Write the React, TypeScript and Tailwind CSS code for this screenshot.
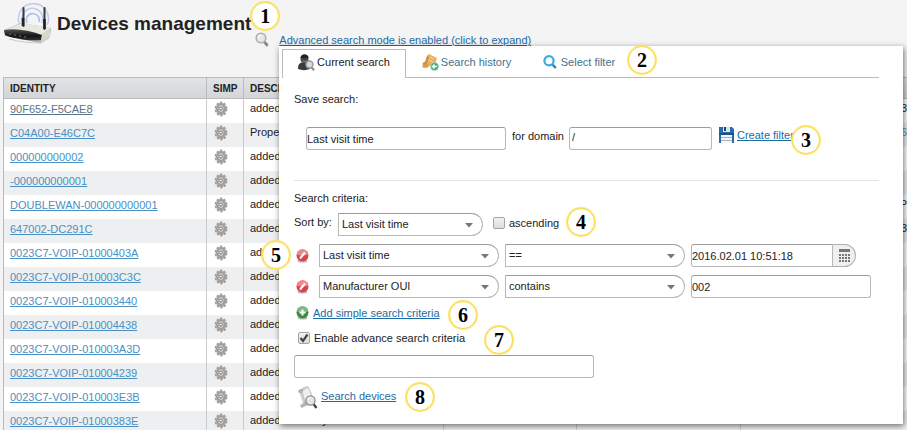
import React, { useState } from "react";

const devices = [
  { id: "90F652-F5CAE8", description: "added manually", end: "3", visited: true },
  { id: "C04A00-E46C7C", description: "Property", end: "6", link: true },
  { id: "000000000002", description: "added manually" },
  { id: "-000000000001", description: "added manually" },
  { id: "DOUBLEWAN-000000000001", description: "added manually", end: "P" },
  { id: "647002-DC291C", description: "added manually", end: "3" },
  { id: "0023C7-VOIP-01000403A", description: "added manually" },
  { id: "0023C7-VOIP-010003C3C", description: "added manually" },
  { id: "0023C7-VOIP-010003440", description: "added manually" },
  { id: "0023C7-VOIP-010004438", description: "added manually" },
  { id: "0023C7-VOIP-010003A3D", description: "added manually" },
  { id: "0023C7-VOIP-010004239", description: "added manually" },
  { id: "0023C7-VOIP-010003E3B", description: "added manually" },
  { id: "0023C7-VOIP-01000383E", description: "added manually" },
];

const fieldBorder = "border border-[#b8b8b8] border-t-[#9c9c9c] bg-white text-[11px] text-[#222]";
const linkStyle = "text-[#1d6ba5] underline underline-offset-1";

function Badge({ n, className }: { n: number; className: string }) {
  return (
    <span
      className={`absolute z-10 m-px flex size-7 items-center justify-center rounded-full border border-[#fadc45] bg-white font-['Liberation_Serif',serif] text-xl leading-none font-bold text-black shadow-[0_0_1px_1px_#fbe36a] ${className}`}
    >
      {n}
    </span>
  );
}

function RouterIcon() {
  return (
    <svg width="48" height="42" viewBox="0 0 48 42" className="shrink-0" aria-hidden="true">
      <defs>
        <linearGradient id="routerFront" x1="0" y1="0" x2="0" y2="1">
          <stop offset="0" stopColor="#555" />
          <stop offset="0.6" stopColor="#151515" />
          <stop offset="1" stopColor="#333" />
        </linearGradient>
      </defs>
      <g fill="none" stroke="#c3ceef" strokeWidth="1.6">
        <path d="M17 24A15 15 0 1 1 43 22" />
        <path d="M20 22A10.500 10.500 0 1 1 38 20" />
        <path d="M23 20A6.500 6.500 0 1 1 35 19" stroke="#b0bfe9" />
      </g>
      <path d="M0 27 17 20l30 5-1 9-10 6L1 33z" fill="#b4b3a6" />
      <path d="M1 27 18 20l29 5-10 7z" fill="#e9e8de" />
      <path d="M0 27c12-2 24 0 38 5l-1 5C24 38 11 36 1 32z" fill="url(#routerFront)" />
      <path d="m38 31 8-5v8l-9 5z" fill="#d9d8cc" />
      <path d="M5 31h2m3 1h2m3 1h2m3 1h2" stroke="#5d7d5d" strokeWidth="1" />
      <path d="M19.500 5v18M40.500 5v21" stroke="#343a46" strokeWidth="2" strokeLinecap="round" />
      <path d="M19 15v8M40.500 16v10" stroke="#222" strokeWidth="2.600" />
      <path d="M5 36c10 3 22 4 32 4l8-5" fill="none" stroke="#c9c9c9" />
    </svg>
  );
}

function GreySearchIcon() {
  return (
    <svg width="14" height="15" viewBox="0 0 14 15" aria-hidden="true">
      <path d="m9 9.500 3 3.500" stroke="#888" strokeWidth="2.800" strokeLinecap="round" />
      <circle cx="6" cy="6" r="4.800" fill="#e4e7ea" stroke="#b0b0b0" strokeWidth="1.600" />
      <path d="M3.500 6A2.500 2.500 0 0 1 6 3.500" fill="none" stroke="#fff" strokeWidth="1.200" />
    </svg>
  );
}

function GearIcon() {
  return (
    <svg width="14" height="16" viewBox="0 0 14 16" aria-hidden="true">
      <ellipse cx="7" cy="8" rx="5.600" ry="6.600" fill="none" stroke="#a09d9b" strokeWidth="1.600" strokeDasharray="2.400 1.500" />
      <ellipse cx="7" cy="8" rx="5.200" ry="6.200" fill="#a5a2a0" />
      <ellipse cx="7" cy="7.500" rx="3.200" ry="4" fill="#cfcdcb" stroke="#918e8b" strokeWidth="0.800" />
      <circle cx="7" cy="7.500" r="1.500" fill="#f4f4f4" stroke="#7d7a78" />
    </svg>
  );
}

function PersonSearchIcon() {
  return (
    <svg width="17" height="17" viewBox="0 0 17 17" aria-hidden="true">
      <path d="M0 15c0-4 1-6 4-6.500h4c3 .5 4 2.500 4 6.500-4 1.500-8 1.500-12 0z" fill="#3b3b3b" />
      <circle cx="6.500" cy="5" r="4" fill="#444" />
      <path d="M2.500 4c0-5 8-5 8 0z" fill="#222" />
      <path d="M4.500 6.500c1 1.500 3 1.500 4 0" fill="none" stroke="#999" />
      <path d="m13.500 13.500 2 2" stroke="#888" strokeWidth="2.200" strokeLinecap="round" />
      <circle cx="11.500" cy="10.500" r="3.500" fill="#d5d8da" stroke="#9b9b9b" strokeWidth="1.400" />
    </svg>
  );
}

function HistoryIcon() {
  return (
    <svg width="17" height="17" viewBox="0 0 17 17" aria-hidden="true">
      <path d="M5 2c1-2 3-2 4-1l6 3-3 9-9-3z" fill="#e8b062" />
      <path d="M5 2c2 0 2 2 1 4l-2 6-3-1c-1-1 0-3 2-3z" fill="#d08a3c" />
      <path d="m8 3 4 2M7 6l4 2" stroke="#f7d69c" />
      <path d="M0 12c1 3 4 1 5 2l3-3-4-1z" fill="#dc9c4c" />
      <circle cx="12.500" cy="12.500" r="4" fill="#3fa677" stroke="#b7dccb" strokeWidth="0.800" />
      <path d="M15 12.500h-4m1.500-2-2 2 2 2" fill="none" stroke="#fff" strokeWidth="1.500" />
    </svg>
  );
}

function BlueSearchIcon() {
  return (
    <svg width="14" height="14" viewBox="0 0 14 14" className="mr-0.5" aria-hidden="true">
      <path d="m9 9 3.800 4" stroke="#1f87b8" strokeWidth="2.400" />
      <circle cx="6" cy="5.800" r="4.600" fill="none" stroke="#35aee2" strokeWidth="2.200" />
    </svg>
  );
}

function SaveIcon() {
  return (
    <svg width="15" height="16" viewBox="0 0 15 16" aria-hidden="true">
      <path d="M0 0h13l2 2v14H0z" fill="#2b6ca8" />
      <path d="M4 0h7v5H4z" fill="#d9e6f0" />
      <path d="M5 0h2v4H5z" fill="#174773" />
      <path d="M0 6h15v2H0z" fill="#17558c" />
      <path d="M2 8h11v8H2z" fill="#f2f4f5" />
      <path d="M2 10.500h11M2 13.500h11" stroke="#a9b4bc" />
    </svg>
  );
}

function RemoveIcon() {
  return (
    <svg width="13" height="14" viewBox="0 0 13 14" aria-hidden="true">
      <ellipse cx="6.500" cy="12" rx="5" ry="1.500" fill="#bbb" />
      <circle cx="6.500" cy="6.500" r="6" fill="#d9434a" />
      <path d="M1 5.500a5.500 5.500 0 0 1 11 0c-3 1.500-8 1.500-11 0z" fill="#ec8a8c" />
      <path d="m4 9.500 5-6" stroke="#fff" strokeWidth="2" />
    </svg>
  );
}

function AddIcon() {
  return (
    <svg width="13" height="14" viewBox="0 0 13 14" aria-hidden="true">
      <ellipse cx="6.500" cy="12" rx="5" ry="1.500" fill="#bbb" />
      <circle cx="6.500" cy="6.500" r="6" fill="#3c8a43" />
      <path d="M1 5.500a5.500 5.500 0 0 1 11 0c-3 1.500-8 1.500-11 0z" fill="#82b686" />
      <path d="M6.500 3.500v6m-3-3h6" stroke="#fff" strokeWidth="2" />
    </svg>
  );
}

function CalendarIcon() {
  return (
    <svg width="11" height="13" viewBox="0 0 11 13" fill="#777" aria-hidden="true">
      <path d="M0 0h11v3H0z" />
      <path d="M0 5h2v2H0zm3 0h2v2H3zm3 0h2v2H6zm3 0h2v2H9zM0 8h2v2H0zm3 0h2v2H3zm3 0h2v2H6zm3 0h2v2H9zM0 11h2v2H0zm3 0h2v2H3zm3 0h2v2H6zm3 0h2v2H9z" />
    </svg>
  );
}

function SearchDevicesIcon() {
  return (
    <svg width="20" height="23" viewBox="0 0 20 23" aria-hidden="true">
      <path d="M5 1 10 0l3 6 3 8-7 6-6 1-1-2 3-2L2 8z" fill="#cfcfcf" />
      <path d="M4 5 10 1l4 9-7 6z" fill="#efefef" stroke="#b0b0b0" strokeWidth="0.600" />
      <path d="M0 6c0-2 3-4 5-3 1 2-1 3-2 5zM2 20l6-5 2 3-6 4z" fill="#b4b4b4" />
      <path d="m15.500 18 3 4" stroke="#444" strokeWidth="2.400" />
      <circle cx="12.500" cy="14.500" r="4.600" fill="#e3e6e8" stroke="#8c8c8c" strokeWidth="1.300" />
      <path d="M10 14a3 3 0 0 1 3-2.500" fill="none" stroke="#fff" />
    </svg>
  );
}

function Select({ label, options, className }: { label: string; options: string[]; className: string }) {
  return (
    <span className={`relative block h-[23px] ${className}`}>
      <select
        aria-label={label}
        className={`block h-full w-full appearance-none rounded-l-[3px] rounded-r-full pr-7 pl-[3px] ${fieldBorder}`}
      >
        {options.map((option) => (
          <option key={option}>{option}</option>
        ))}
      </select>
      <svg width="8" height="5" viewBox="0 0 8 5" className="pointer-events-none absolute top-[10px] right-[10px]" aria-hidden="true">
        <path d="M0 0h8L4 4.500z" fill="#777" />
      </svg>
    </span>
  );
}

function Checkbox({ id, defaultChecked }: { id: string; defaultChecked?: boolean }) {
  return (
    <span className="relative block size-3">
      <input
        id={id}
        type="checkbox"
        defaultChecked={defaultChecked}
        className="peer block size-3 appearance-none rounded-[2px] border border-[#a5a5a5] bg-linear-to-b from-[#f2f2f2] to-[#dcdcdc]"
      />
      <svg viewBox="0 0 12 12" className="pointer-events-none absolute inset-0 hidden size-3 peer-checked:block" aria-hidden="true">
        <path d="m2.500 6 2.500 3 4.500-6.500" fill="none" stroke="#444" strokeWidth="2.200" />
      </svg>
    </span>
  );
}

const tabs = [
  { name: "Current search", Icon: PersonSearchIcon, width: "w-[124px]" },
  { name: "Search history", Icon: HistoryIcon, width: "w-[121px]" },
  { name: "Select filter", Icon: BlueSearchIcon, width: "w-[104px]" },
];

function SearchPanel() {
  const [active, setActive] = useState("Current search");
  return (
    <section className="absolute top-[46px] right-1 left-[279px] h-[378px] bg-white pt-[3px] pr-6 pl-[3px] shadow-[1px_2px_6px_rgba(0,0,0,0.55)]">
      <div role="tablist" className="flex h-[29px] border-b border-[#bbb]">
        {tabs.map(({ name, Icon, width }) => (
          <button
            key={name}
            role="tab"
            aria-selected={active === name}
            onClick={() => setActive(name)}
            className={`flex h-[29px] items-center justify-center gap-0.5 pb-[3px] text-[11px] ${width} ${
              active === name ? "border border-b-0 border-[#bbb] bg-white text-[#222]" : "text-[#46708c]"
            }`}
          >
            <Icon />
            {name}
          </button>
        ))}
      </div>
      <Badge n={2} className="-top-px left-[348px]" />

      <div className="pt-[13px] pl-3 text-[11px] text-[#222]">
        <h2 className="leading-4">Save search:</h2>
        <div className="mt-5 flex items-start pl-3">
          <input aria-label="Filter name" defaultValue="Last visit time" className={`h-[23px] w-[200px] rounded-[3px] ${fieldBorder}`} />
          <label htmlFor="domain" className="ml-1.5 leading-[18px]">for domain</label>
          <input id="domain" defaultValue="/" className={`ml-[5px] h-[23px] w-[143px] rounded-[3px] px-0.5 pb-1 ${fieldBorder}`} />
          <div className="relative ml-[7px] flex gap-[3px]">
            <SaveIcon />
            <a href="#create" className={`leading-4 ${linkStyle}`}>Create filter</a>
            <Badge n={3} className="-top-0.5 left-[72px]" />
          </div>
        </div>
        <hr className="mt-[30px] border-[#e2e2e2]" />

        <h2 className="mt-[9px] leading-4">Search criteria:</h2>
        <div className="relative mt-[7px] flex items-start">
          <span className="w-11 leading-[18px]">Sort by:</span>
          <Select label="Sort by" options={["Last visit time", "Manufacturer OUI"]} className="w-[145px]" />
          <label htmlFor="ascending" className="ml-2.5 flex items-center gap-1 pt-0.5 leading-4">
            <Checkbox id="ascending" />
            ascending
          </label>
          <Badge n={4} className="-top-1.5 left-[272px]" />
        </div>
        <div className="relative mt-2 flex items-center">
          <Badge n={5} className="-top-1 left-[-33px]" />
          <button aria-label="Remove visit time criterion" className="mr-2.5 ml-0.5"><RemoveIcon /></button>
          <Select label="Field" options={["Last visit time", "Manufacturer OUI"]} className="w-[180px]" />
          <Select label="Comparison" options={["==", "contains"]} className="ml-1.5 w-[180px]" />
          <input aria-label="Date" defaultValue="2016.02.01 10:51:18" className={`ml-1.5 h-[23px] w-[142px] rounded-l-[3px] ${fieldBorder}`} />
          <button aria-label="Open calendar" className="flex h-[23px] w-[23px] items-center justify-center rounded-r-full border border-l-0 border-[#b0b0b0] bg-[#f0f0f0]">
            <CalendarIcon />
          </button>
        </div>
        <div className="mt-2 flex items-center">
          <button aria-label="Remove manufacturer criterion" className="mr-2.5 ml-0.5"><RemoveIcon /></button>
          <Select label="Field" options={["Manufacturer OUI", "Last visit time"]} className="w-[180px]" />
          <Select label="Comparison" options={["contains", "=="]} className="ml-1.5 w-[180px]" />
          <input aria-label="Value" defaultValue="002" className={`ml-1.5 h-[23px] w-[180px] rounded-[3px] ${fieldBorder}`} />
        </div>
        <div className="relative mt-[7px] flex items-center gap-1 pl-0.5">
          <AddIcon />
          <a href="#add" className={`leading-4 ${linkStyle}`}>Add simple search criteria</a>
          <Badge n={6} className="top-[-5px] left-[154px]" />
        </div>
        <label htmlFor="advance" className="relative mt-[9px] flex items-center gap-1 pl-1 leading-4">
          <Checkbox id="advance" defaultChecked />
          Enable advance search criteria
          <Badge n={7} className="top-[-5px] left-[190px]" />
        </label>
        <input aria-label="Advanced criteria" className={`mt-[9px] block h-[23px] w-[300px] rounded-[3px] ${fieldBorder}`} />
        <div className="relative mt-2 flex gap-[3px] pl-1">
          <SearchDevicesIcon />
          <a href="#search" className={`pt-0.5 leading-4 ${linkStyle}`}>Search devices</a>
          <Badge n={8} className="top-[-4px] left-[111px]" />
        </div>
      </div>
    </section>
  );
}

const th = "border-r border-[#bbb] p-0 pl-1.5 text-left text-[10px] font-bold";

export default function App() {
  return (
    <main className="relative h-screen overflow-hidden bg-[#f4f4f4] font-['Liberation_Sans',Arial,sans-serif] text-[11px] text-[#222]">
      <header className="flex h-[77px] items-start pt-[3px] pl-1">
        <RouterIcon />
        <h1 className="mt-[7px] ml-[5px] text-[19px] leading-7 font-bold">Devices management</h1>
        <div className="relative mt-[29px] ml-1 flex">
          <Badge n={1} className="top-[-31px] left-[-5px]" />
          <GreySearchIcon />
          <a href="#expand" className={`ml-2.5 leading-4 ${linkStyle}`}>Advanced search mode is enabled (click to expand)</a>
        </div>
      </header>

      <div className="pl-[3px]">
        <table className="w-full table-fixed border-separate border-spacing-0 border-l border-[#bbb]">
          <colgroup>
            <col className="w-[203px]" />
            <col className="w-[37px]" />
            <col className="w-[200px]" />
            <col className="w-[133px]" />
            <col className="w-[164px]" />
            <col />
          </colgroup>
          <thead>
            <tr className="h-[22px] bg-linear-to-b from-[#e3e4e6] to-[#d2d4d8] *:border-y *:border-[#bbb]">
              <th className={th}>IDENTITY</th>
              <th className={th}>SIMP</th>
              <th className={th}>DESCRIPTION</th>
              <th className={th} />
              <th className={th} />
              <th />
            </tr>
          </thead>
          <tbody>
            {devices.map((device) => (
              <tr key={device.id} className="h-6 odd:bg-white even:bg-[#edeff1]">
                <td className="border-r border-[#ccc] p-0 pb-1 pl-1.5">
                  <a href="#device" className={`underline underline-offset-1 ${device.visited ? "text-[#5b7386]" : "text-[#4a90c4]"}`}>
                    {device.id}
                  </a>
                </td>
                <td className="border-r border-[#ccc] p-0 pb-1 pl-[7px]"><GearIcon /></td>
                <td className="overflow-hidden border-r border-[#ccc] p-0 pb-[5px] pl-1.5 whitespace-nowrap">{device.description}</td>
                <td className="border-r border-[#ccc] p-0" />
                <td className="border-r border-[#ccc] p-0" />
                <td className={`p-0 pb-[5px] text-right ${device.link ? "text-[#4a90c4]" : ""}`}>{device.end}</td>
              </tr>
            ))}
          </tbody>
        </table>
      </div>

      <SearchPanel />
    </main>
  );
}
